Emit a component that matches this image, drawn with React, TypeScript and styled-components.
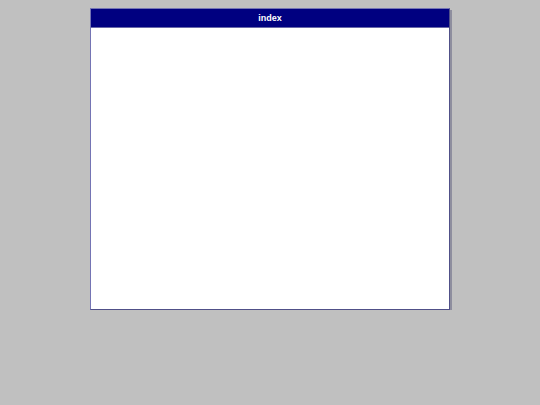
import React from "react";
import styled, { createGlobalStyle } from "styled-components";

const Global = createGlobalStyle`
  html, body { margin: 0; padding: 0; background: #c0c0c0; }
  body { font-family: "Liberation Sans", Arial, sans-serif; }
`;

const Page = styled.div`
  padding-top: 8px;
  display: flex;
  justify-content: center;
`;

const Window = styled.div`
  width: 358px;
  height: 300px;
  border: 1px solid #7474b4;
  border-right-color: #505088;
  border-bottom-color: #505088;
  background: #ffffff;
  box-shadow: 2px 2px 0 #8e8e9e;
  display: flex;
  flex-direction: column;
`;

const TitleBar = styled.div`
  height: 18px;
  background: #000080;
  color: #ffffff;
  font-size: 9px;
  font-weight: bold;
  display: flex;
  align-items: center;
  justify-content: center;
  border-bottom: 1px solid #6868a8;
`;

const Body = styled.div`
  flex: 1;
  background: #ffffff;
`;

export default function App() {
  return (
    <>
      <Global />
      <Page>
        <Window>
          <TitleBar>index</TitleBar>
          <Body />
        </Window>
      </Page>
    </>
  );
}
